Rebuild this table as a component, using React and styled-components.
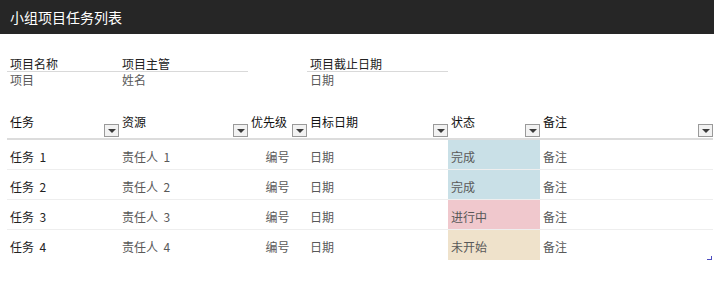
import styled, { createGlobalStyle } from "styled-components";

const GlobalStyle = createGlobalStyle`
  body {
    margin: 0;
    background: #fff;
    font-family: "Noto Sans CJK SC", "Noto Sans", sans-serif;
    font-size: 12px;
  }
`;

const COLUMNS = "112px 129px 59px 141px 92px 173px";

const TitleBar = styled.div`
  height: 34px;
  background-color: #262626;
  color: #fff;
  font-size: 14px;
  display: flex;
  align-items: center;
  padding-left: 10px;
  box-sizing: border-box;
`;

const Sheet = styled.div`
  padding: 22px 0 0 7px;
`;

const InfoGrid = styled.div`
  display: grid;
  grid-template-columns: ${COLUMNS};
  margin-bottom: 25px;
`;

const InfoField = styled.div`
  grid-column: ${({ $col }) => $col};
`;

const InfoLabels = styled.div`
  display: flex;
  border-bottom: 1px solid #d9d9d9;
  line-height: 15px;
  color: #222;
`;

const InfoValues = styled.div`
  display: flex;
  line-height: 15px;
  color: #595959;
`;

const InfoCell = styled.div`
  width: ${({ $w }) => $w}px;
  padding-left: 3px;
  box-sizing: border-box;
  white-space: nowrap;
`;

const Table = styled.div`
  position: relative;
  width: 706px;
`;

const HeaderRow = styled.div`
  display: grid;
  grid-template-columns: ${COLUMNS};
  height: 26px;
  border-bottom: 2px solid #dcdcdc;
`;

const HeaderCell = styled.div`
  position: relative;
  padding: 3px 0 0 3px;
  color: #111;
  line-height: 14px;
  white-space: nowrap;
`;

const FilterButton = styled.span`
  position: absolute;
  right: 0;
  bottom: 1px;
  width: 15px;
  height: 13px;
  box-sizing: border-box;
  border: 1px solid #9a9a9a;
  background: #f2f2f2;
  display: flex;
  align-items: center;
  justify-content: center;

  &::after {
    content: "";
    border-left: 4px solid transparent;
    border-right: 4px solid transparent;
    border-top: 4px solid #3a3a3a;
    margin-top: 1px;
  }
`;

const Row = styled.div`
  display: grid;
  grid-template-columns: ${COLUMNS};
  height: 30px;
  border-bottom: ${({ $last }) => ($last ? "none" : "1px solid #eeeeee")};
  box-sizing: border-box;
`;

const STATUS_COLORS = {
  完成: "#c9e0e7",
  进行中: "#f0c8cd",
  未开始: "#efe2cb",
};

const Cell = styled.div`
  display: flex;
  align-items: center;
  justify-content: ${({ $center }) => ($center ? "center" : "flex-start")};
  padding: 3px 0 0 ${({ $center }) => ($center ? "0" : "3px")};
  color: ${({ $dark }) => ($dark ? "#222" : "#595959")};
  background: ${({ $status }) => STATUS_COLORS[$status] || "transparent"};
  white-space: pre;
`;

const CornerMark = styled.span`
  position: absolute;
  right: 1px;
  bottom: 0;
  width: 4px;
  height: 3px;
  border-right: 1px solid #4d4dbf;
  border-bottom: 1px solid #4d4dbf;
`;

const headers = ["任务", "资源", "优先级", "目标日期", "状态", "备注"];

const tasks = [
  { name: "任务  1", owner: "责任人  1", status: "完成" },
  { name: "任务  2", owner: "责任人  2", status: "完成" },
  { name: "任务  3", owner: "责任人  3", status: "进行中" },
  { name: "任务  4", owner: "责任人  4", status: "未开始" },
];

const App = () => {
  return (
    <>
      <GlobalStyle />
      <TitleBar>小组项目任务列表</TitleBar>
      <Sheet>
        <InfoGrid>
          <InfoField $col="1 / 3">
            <InfoLabels>
              <InfoCell $w={112}>项目名称</InfoCell>
              <InfoCell $w={127}>项目主管</InfoCell>
            </InfoLabels>
            <InfoValues>
              <InfoCell $w={112}>项目</InfoCell>
              <InfoCell $w={127}>姓名</InfoCell>
            </InfoValues>
          </InfoField>
          <InfoField $col="4 / 5">
            <InfoLabels>
              <InfoCell $w={141}>项目截止日期</InfoCell>
            </InfoLabels>
            <InfoValues>
              <InfoCell $w={141}>日期</InfoCell>
            </InfoValues>
          </InfoField>
        </InfoGrid>

        <Table>
          <HeaderRow>
            {headers.map((h) => (
              <HeaderCell key={h}>
                {h}
                <FilterButton />
              </HeaderCell>
            ))}
          </HeaderRow>
          {tasks.map((t, i) => (
            <Row key={t.name} $last={i === tasks.length - 1}>
              <Cell $dark>{t.name}</Cell>
              <Cell>{t.owner}</Cell>
              <Cell $center>编号</Cell>
              <Cell>日期</Cell>
              <Cell $status={t.status}>{t.status}</Cell>
              <Cell>备注</Cell>
            </Row>
          ))}
          <CornerMark />
        </Table>
      </Sheet>
    </>
  );
};

export default App;
